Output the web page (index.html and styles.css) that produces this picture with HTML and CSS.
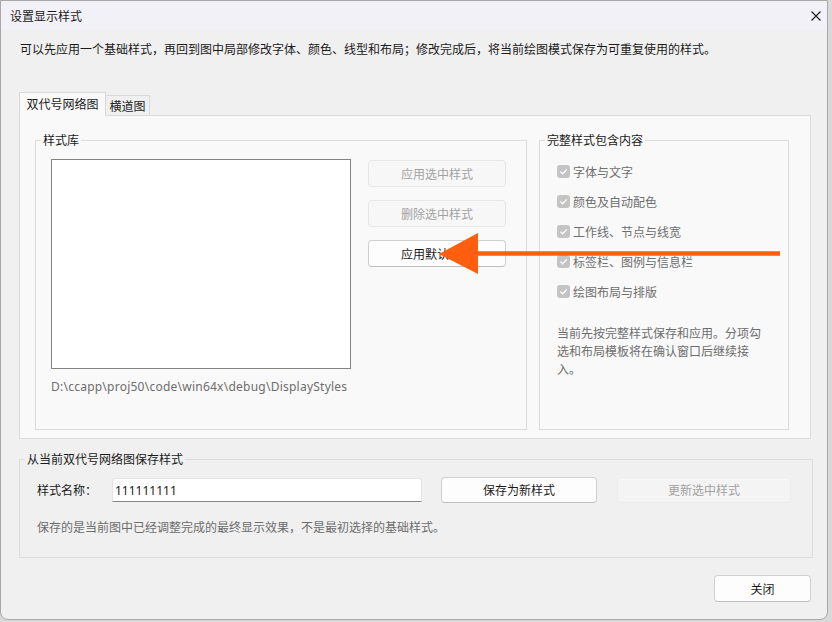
FILE: index.html
```html
<!DOCTYPE html>
<html lang="zh-CN">
<head>
<meta charset="utf-8">
<title>设置显示样式</title>
<link rel="stylesheet" href="styles.css">
</head>
<body>
<div class="window">
  <div class="titlebar">
    <span class="title">设置显示样式</span>
    <svg class="close" width="10" height="10" viewBox="0 0 10 10"><path d="M0.5 0.5 L9.5 9.5 M9.5 0.5 L0.5 9.5" stroke="#1a1a1a" stroke-width="1.1" fill="none"/></svg>
  </div>
  <div class="content">
    <p class="desc">可以先应用一个基础样式，再回到图中局部修改字体、颜色、线型和布局；修改完成后，将当前绘图模式保存为可重复使用的样式。</p>
    <div class="tabs">
      <div class="tabstrip">
        <div class="tab active">双代号网络图</div>
        <div class="tab">横道图</div>
      </div>
      <div class="tabpanel">
        <fieldset class="group lib">
          <legend>样式库</legend>
          <div class="lib-body">
            <div class="lib-row">
              <div class="listbox"></div>
              <div class="lib-buttons">
                <button class="btn" disabled>应用选中样式</button>
                <button class="btn" disabled>删除选中样式</button>
                <button class="btn">应用默认样式</button>
              </div>
            </div>
            <div class="path">D:\ccapp\proj50\code\win64x\debug\DisplayStyles</div>
          </div>
        </fieldset>
        <fieldset class="group contents">
          <legend>完整样式包含内容</legend>
          <div class="contents-body">
            <ul class="checks">
              <li><span class="cb"><svg width="13" height="13" viewBox="0 0 13 13"><path d="M3.3 6.6 L5.6 8.8 L9.8 4.4" stroke="#fff" stroke-width="1.3" fill="none"/></svg></span>字体与文字</li>
              <li><span class="cb"><svg width="13" height="13" viewBox="0 0 13 13"><path d="M3.3 6.6 L5.6 8.8 L9.8 4.4" stroke="#fff" stroke-width="1.3" fill="none"/></svg></span>颜色及自动配色</li>
              <li><span class="cb"><svg width="13" height="13" viewBox="0 0 13 13"><path d="M3.3 6.6 L5.6 8.8 L9.8 4.4" stroke="#fff" stroke-width="1.3" fill="none"/></svg></span>工作线、节点与线宽</li>
              <li><span class="cb"><svg width="13" height="13" viewBox="0 0 13 13"><path d="M3.3 6.6 L5.6 8.8 L9.8 4.4" stroke="#fff" stroke-width="1.3" fill="none"/></svg></span>标签栏、图例与信息栏</li>
              <li><span class="cb"><svg width="13" height="13" viewBox="0 0 13 13"><path d="M3.3 6.6 L5.6 8.8 L9.8 4.4" stroke="#fff" stroke-width="1.3" fill="none"/></svg></span>绘图布局与排版</li>
            </ul>
            <p class="note">当前先按完整样式保存和应用。分项勾选和布局模板将在确认窗口后继续接入。</p>
          </div>
        </fieldset>
      </div>
    </div>
    <fieldset class="group save">
      <legend>从当前双代号网络图保存样式</legend>
      <div class="save-body">
        <div class="save-row">
          <label class="name-label" for="style-name">样式名称：</label>
          <input class="name-input" id="style-name" type="text" value="111111111">
          <button class="btn btn-save">保存为新样式</button>
          <button class="btn btn-update" disabled>更新选中样式</button>
        </div>
        <p class="hint">保存的是当前图中已经调整完成的最终显示效果，不是最初选择的基础样式。</p>
      </div>
    </fieldset>
    <div class="footer">
      <button class="btn btn-close">关闭</button>
    </div>
  </div>
</div>
<svg class="arrow" width="832" height="622" viewBox="0 0 832 622">
  <line x1="470" y1="253.5" x2="780" y2="253.5" stroke="#ff5e0e" stroke-width="4.6"/>
  <polygon points="439,254 478,233 478,274" fill="#ff5e0e"/>
</svg>
</body>
</html>
```
FILE: styles.css
```css
* { box-sizing: border-box; }
html, body { margin: 0; padding: 0; }
body {
  position: relative;
  width: 832px;
  height: 622px;
  overflow: hidden;
  background: #d9d9d9;
  font-family: "Noto Sans CJK SC", "Noto Sans", sans-serif;
  font-size: 12px;
  color: #1a1a1a;
}
.window {
  width: 828px;
  height: 620px;
  background: #f0f0f0;
  border: 1px solid #a8a8a8;
  border-radius: 0 0 8px 8px;
  overflow: hidden;
}
.titlebar {
  height: 29px;
  background: #f3f1f8;
  display: flex;
  align-items: center;
  justify-content: space-between;
  padding: 0 6px 0 9px;
}
.title { line-height: 16px; }
.content { padding-left: 18px; }
.desc {
  margin: 11px 0 0;
  padding-left: 1px;
  line-height: 16px;
}
.tabstrip {
  display: flex;
  align-items: flex-end;
  margin-top: 35px;
}
.tab {
  height: 20px;
  width: 44px;
  line-height: 19px;
  text-align: center;
  border: 1px solid #d9d9d9;
  border-left: none;
  border-bottom: none;
  background: #f0f0f0;
}
.tab.active {
  position: relative;
  z-index: 1;
  width: 87px;
  height: 24px;
  line-height: 21px;
  margin-bottom: -1px;
  border-left: 1px solid #d9d9d9;
  background: #f9f9f9;
}
.tabpanel {
  width: 792px;
  height: 324px;
  border: 1px solid #dadada;
  background: #f9f9f9;
  display: flex;
  padding: 16px 0 0 15px;
  gap: 12px;
}
.group {
  margin: 0;
  padding: 0;
  min-width: 0;
  border: 1px solid #dcdcdc;
}
.group legend {
  margin-left: 5px;
  padding: 0 2px;
  line-height: 16px;
  color: #1a1a1a;
}
.lib { width: 492px; height: 298px; }
.contents { width: 250px; height: 298px; }
.lib-body { padding: 11px 0 0 15px; }
.lib-row { display: flex; gap: 17px; }
.listbox {
  width: 300px;
  height: 210px;
  background: #fff;
  border: 1px solid #838383;
}
.lib-buttons {
  display: flex;
  flex-direction: column;
  gap: 13px;
  margin-top: 1px;
}
.lib-buttons .btn { width: 138px; height: 27px; }
.btn {
  font-family: "Noto Sans CJK SC", "Noto Sans", sans-serif;
  font-size: 12px;
  color: #1a1a1a;
  background: #fdfdfd;
  border: 1px solid #d0d0d0;
  border-bottom-color: #bdbdbd;
  border-radius: 4px;
  padding: 0;
  line-height: 16px;
}
.btn:disabled {
  color: #a2a2a2;
  background: #f7f7f7;
  border-color: #e6e6e6;
}
.path {
  margin-top: 10px;
  line-height: 16px;
  color: #6d6d6d;
  font-family: "Noto Sans", "Noto Sans CJK SC", sans-serif;
  font-size: 12px;
  letter-spacing: 0.24px;
}
.contents-body { padding: 8px 0 0 17px; }
.checks { list-style: none; margin: 0; padding: 0; }
.checks li {
  height: 30px;
  display: flex;
  align-items: center;
  color: #6e6e6e;
}
.cb {
  width: 13px;
  height: 13px;
  margin-right: 3px;
  border-radius: 3px;
  background: #c4c4c4;
  display: flex;
}
.note {
  margin: 18px 0 0;
  width: 210px;
  line-height: 18px;
  color: #6d6d6d;
}
.save {
  margin-top: 12px;
  width: 794px;
  height: 107px;
  background: #f0f0f0;
}
.save-body { padding: 10px 0 0 17px; }
.save-row {
  display: flex;
  align-items: center;
  height: 26px;
}
.name-label { width: 75px; line-height: 16px; }
.name-input {
  width: 310px;
  height: 24px;
  border: 1px solid #e4e4e4;
  border-bottom-color: #868686;
  border-radius: 3px 3px 0 0;
  background: #fff;
  padding: 0 2px;
  font-family: "Noto Sans", sans-serif;
  font-size: 12px;
  color: #1a1a1a;
  outline: none;
}
.btn-save { width: 156px; height: 26px; margin-left: 19px; }
.btn-update {
  width: 174px;
  height: 26px;
  margin-left: 20px;
}
.btn-update:disabled { background: #f4f4f4; border-color: #ececec; }
.hint {
  margin: 16px 0 0;
  line-height: 16px;
  color: #6d6d6d;
}
.footer {
  width: 792px;
  margin-top: 17px;
  display: flex;
  justify-content: flex-end;
}
.btn-close { width: 97px; height: 27px; }
.arrow {
  position: absolute;
  left: 0;
  top: 0;
  pointer-events: none;
}
```
